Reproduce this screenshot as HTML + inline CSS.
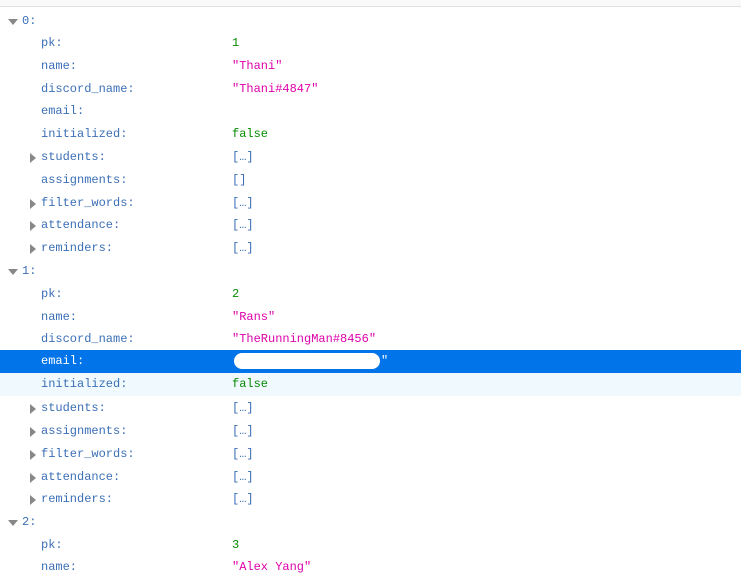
<!DOCTYPE html>
<html><head><style>
body{margin:0;width:741px;height:573px;overflow:hidden;background:#fff;font-family:"Liberation Mono",monospace;font-size:12px;position:relative}
.w{position:absolute;left:0;top:1px;width:741px;height:573px}
.top{position:absolute;left:0;top:0;width:741px;height:6px;background:#f9f9fa;border-bottom:1px solid #e0e0e2}
.r{position:absolute;left:0;width:741px;height:22px;line-height:22px}
.k{position:absolute;color:#3b6fb6}
.v{position:absolute;left:232px}
.s{color:#dd00a9}.n{color:#058b00}.b{color:#3b6fb6}
.tw{position:absolute;left:30px;top:7px;width:0;height:0;border-top:5px solid transparent;border-bottom:5px solid transparent;border-left:6px solid #888}
.td{position:absolute;left:8px;top:9px;width:0;height:0;border-left:5px solid transparent;border-right:5px solid transparent;border-top:6px solid #888}
.sel{background:#0074e8}.sel .k{color:#fff}
.hov{background:#f0f9fe}
</style></head><body>
<div class="top"></div>
<div class="w">
<div class="r" style="top:9px"><span class="td"></span><span class="k" style="left:22px">0:</span></div>
<div class="r" style="top:31px"><span class="k" style="left:41px">pk:</span><span class="v n">1</span></div>
<div class="r" style="top:54px"><span class="k" style="left:41px">name:</span><span class="v s">"Thani"</span></div>
<div class="r" style="top:77px"><span class="k" style="left:41px">discord_name:</span><span class="v s">"Thani#4847"</span></div>
<div class="r" style="top:99px"><span class="k" style="left:41px">email:</span></div>
<div class="r" style="top:122px"><span class="k" style="left:41px">initialized:</span><span class="v n">false</span></div>
<div class="r" style="top:145px"><span class="tw"></span><span class="k" style="left:41px">students:</span><span class="v b">[…]</span></div>
<div class="r" style="top:168px"><span class="k" style="left:41px">assignments:</span><span class="v b">[]</span></div>
<div class="r" style="top:191px"><span class="tw"></span><span class="k" style="left:41px">filter_words:</span><span class="v b">[…]</span></div>
<div class="r" style="top:213px"><span class="tw"></span><span class="k" style="left:41px">attendance:</span><span class="v b">[…]</span></div>
<div class="r" style="top:236px"><span class="tw"></span><span class="k" style="left:41px">reminders:</span><span class="v b">[…]</span></div>
<div class="r" style="top:259px"><span class="td"></span><span class="k" style="left:22px">1:</span></div>
<div class="r" style="top:282px"><span class="k" style="left:41px">pk:</span><span class="v n">2</span></div>
<div class="r" style="top:305px"><span class="k" style="left:41px">name:</span><span class="v s">"Rans"</span></div>
<div class="r" style="top:327px"><span class="k" style="left:41px">discord_name:</span><span class="v s">"TheRunningMan#8456"</span></div>
<div class="r sel" style="top:349px;height:23px"><span class="k" style="left:41px">email:</span><span style="position:absolute;left:234px;top:3px;width:146px;height:16px;border-radius:8px;background:#fff"></span><span style="position:absolute;left:381px;color:#fff">"</span></div>
<div class="r hov" style="top:372px;height:23px"><span class="k" style="left:41px">initialized:</span><span class="v n">false</span></div>
<div class="r" style="top:396px"><span class="tw"></span><span class="k" style="left:41px">students:</span><span class="v b">[…]</span></div>
<div class="r" style="top:419px"><span class="tw"></span><span class="k" style="left:41px">assignments:</span><span class="v b">[…]</span></div>
<div class="r" style="top:442px"><span class="tw"></span><span class="k" style="left:41px">filter_words:</span><span class="v b">[…]</span></div>
<div class="r" style="top:465px"><span class="tw"></span><span class="k" style="left:41px">attendance:</span><span class="v b">[…]</span></div>
<div class="r" style="top:487px"><span class="tw"></span><span class="k" style="left:41px">reminders:</span><span class="v b">[…]</span></div>
<div class="r" style="top:510px"><span class="td"></span><span class="k" style="left:22px">2:</span></div>
<div class="r" style="top:533px"><span class="k" style="left:41px">pk:</span><span class="v n">3</span></div>
<div class="r" style="top:555px"><span class="k" style="left:41px">name:</span><span class="v s">"Alex Yang"</span></div>
</div>
</body></html>
